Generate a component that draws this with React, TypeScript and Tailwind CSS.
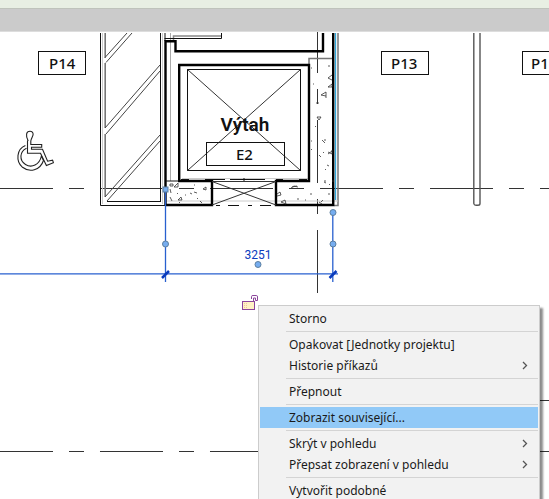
import React from 'react';

interface MenuEntry {
  label: string;
  submenu?: boolean;
  active?: boolean;
}

const menuGroups: MenuEntry[][] = [
  [{ label: 'Storno' }],
  [{ label: 'Opakovat [Jednotky projektu]' }, { label: 'Historie příkazů', submenu: true }],
  [{ label: 'Přepnout' }],
  [{ label: 'Zobrazit související...', active: true }],
  [
    { label: 'Skrýt v pohledu', submenu: true },
    { label: 'Přepsat zobrazení v pohledu', submenu: true },
  ],
  [{ label: 'Vytvořit podobné' }],
];

const grips = [
  [165.5, 244],
  [333, 212.5],
  [333, 244],
  [258, 264.5],
];

const ContextMenu: React.FC = () => (
  <div
    role="menu"
    className="absolute left-[258px] top-[273px] w-[282px] border border-[#cccccc] bg-[#f2f2f2] px-px py-0.5 shadow-[3px_3px_2px_rgba(0,0,0,0.45)]"
  >
    {menuGroups.map((group, index) => (
      <div key={index} role="group">
        {index > 0 && (
          <div role="separator" className="ml-[26px] flex h-[5px] items-center">
            <div className="h-px w-full bg-[#d4d4d4]" />
          </div>
        )}
        {group.map((entry) => (
          <button
            key={entry.label}
            type="button"
            role="menuitem"
            className={`flex h-[21px] w-full items-center justify-between pl-[29px] pr-2 text-left text-[12px] leading-[20px] text-[#1a1a1a] ${
              entry.active ? 'bg-[#91c9f7]' : 'hover:bg-[#91c9f7]'
            }`}
          >
            <span className="whitespace-nowrap">{entry.label}</span>
            {entry.submenu && (
              <svg width="8" height="10" viewBox="0 0 8 10" fill="none" stroke="#555" strokeWidth="1.3">
                <path d="M1 1 4.500 4.500 1 8" />
              </svg>
            )}
          </button>
        ))}
      </div>
    ))}
  </div>
);

const RoomTag: React.FC<{ x: number; y: number; width: number; label: string; textX: number }> = ({
  x,
  y,
  width,
  label,
  textX,
}) => (
  <g>
    <rect x={x} y={y} width={width} height="23" fill="none" stroke="#111" />
    <text x={textX} y={y + 17} fill="#111" className="text-[15px] font-medium">
      {label}
    </text>
  </g>
);

const FloorPlan: React.FC = () => (
  <svg className="block h-full w-full" role="img" aria-label="Výtah E2">
    <g transform="translate(0 -32)" fill="none" stroke="#111" strokeWidth="1">
      {/* grid axes */}
      <g stroke="#333" strokeDasharray="63 16 15 16">
        <path d="M-10 188.5H560M-10 451.5H258M317.5 10V294" />
        <path d="M539 451.5H560M539 400.5H560" strokeDasharray="none" />
      </g>

      {/* hatched shaft */}
      <path d="M100.5 33V205.5H165M160.5 33V201.5M107 201.5H161" />
      <path d="M102.5 33V204M162.5 33V204" stroke="#ccc" />
      <path d="M105.2 33V58M105.2 63V128M105.2 134V197" stroke="#777" strokeWidth="1.6" />
      <path
        d="M105 57.5 127 33M106 62.5 132 33M105 128 160 65M106 134 160 71M105 197 160 135M107 201 160 141"
        stroke="#444"
      />

      {/* upper frame */}
      <path d="M170.5 33V181" stroke="#aaa" />
      <path d="M173.5 41V36H221" stroke="#888" strokeWidth="1.5" />
      <path d="M164.5 38.5H221.5V33M165 33V41" />

      {/* concrete walls */}
      <path d="M309 64V58.5H332M338 33V205.5H334" stroke="#777" strokeWidth="1.5" />
      <path d="M166 201H338M182 178.5H309" stroke="#ccc" />
      <path d="M335.5 33V200" stroke="#2fa8dc" strokeWidth="1.3" />
      <g stroke="#000" strokeWidth="2.4">
        <path d="M165.5 205V41.3H175.5V51.3H323V33" />
        <path d="M212 181H179.2V65H309V181H276V205H333.2V33" />
        <path d="M165 205H212V180" />
      </g>
      <path d="M166 181H179M181 179.5H189M205 179.5H225M230 179.5H265M276 179.5H283M299 179.5H307M244 178V181" />

      {/* cabin */}
      <rect x="187.5" y="69.5" width="113" height="101" />
      <path d="M187.5 69.5 300.5 170.5M300.5 69.5 187.5 170.5" stroke="#333" />

      {/* door */}
      <path d="M212 181.5H276M212 181.5 276 205M212 205 276 181.5" stroke="#333" />
      <path d="M216 205.500H276" strokeDasharray="4 8 11 9" />

      {/* aggregate in the concrete */}
      <g stroke="#333" strokeWidth="0.8">
        <path d="m321 95 5-3v6m-5-3 5 1M328 78l4-3m-4 3 4 2m-4 7 4-3v3zM328 66h2m-17 18h1m-3-16h1m4 35h3M311 141h1m12 1 1 1m-5 13 1 1m-4-40h4l-2 3zM322 140l2 2m3 23 2 1m-4 3 1 1M328 154l4-3m-4 1 4 2v-4m-8-10h2m-2 42 2 1m-7-28 1 1m-5-30 1 1m-5 23 1-1m11 3 1 1" />
        <path d="m291 188 3-2 4 1m-6 0 5-1M277 194l3-2 1 3-4 1m4 6 4-2 1 4zm16-3h2m11-5h2m7 8 3 2m-1-2 2-2m5-6h2m-25 6h1m18-19h2m3 3 1 1m2-4h2" />
        <path d="m174 187 4-4v4zm-4-3h3v2h-3zm0 5 1 4m-1 4 2 4m6-1 3-3 1 3zm12-7 2 1m-13 8 1 1m20-2 2 2m-8-11 3 1m6-4 3-2v3zm-9-4h1m-18 8 1 1m7 1h1m11 3 1 1" />
      </g>

      {/* parking divider */}
      <path d="M473.8 33V203.5Q474 205.3 476 205.3H478Q480 205.3 480 203.5V33" stroke="#555" strokeWidth="1.4" />

      {/* wheelchair symbol */}
      <g stroke="#222" strokeWidth="1.1">
        <path d="M28 140.5C26.8 138.5 26.3 136 26.6 134C27 131.8 28.3 131.2 30 131.2C32 131.2 33.2 132.7 33.1 134.5C33 136.5 31 138.5 30.8 141V144.5H41.7V147.2H31.5V149.2H42.5L47.6 161.2L52.6 160.2L53.4 162.7L46.4 165.5L40.5 153.3H27.5V141Z" />
        <path d="M25.4 145.5C16.5 149 15.5 161.5 22.5 167.3C29.5 172.7 40 170.7 43.5 160.5L41.4 156C39.5 165 31.5 168.4 25.5 164.5C19 160.5 19.5 151.5 26.5 148.2" />
      </g>

      {/* selected dimension */}
      <g stroke="#2860cf">
        <path d="M0 273.8H338M165.5 189V282M332.8 212V282" strokeWidth="1.3" />
        <path d="M162 278 169 271M329.5 278 336.5 271" stroke="#0a3bbd" strokeWidth="2.5" />
      </g>
      <g fill="#76adf0" stroke="#5d7f9f">
        <rect x="163" y="187" width="5" height="5" />
        {grips.map(([cx, cy]) => (
          <circle key={`${cx}-${cy}`} cx={cx} cy={cy} r="3" />
        ))}
      </g>

      {/* open padlock */}
      <g stroke="#8b459b">
        <rect x="242.5" y="301.5" width="12" height="8" fill="#fff3c4" />
        <path d="M251.5 299V296.5Q251.5 295.5 253 295.5H256.5Q257.5 295.5 257.5 297V300.5H255.5V298H253.5V301" />
        <path d="M244.5 303V308M246.5 303V308" stroke="#f1c4a0" strokeDasharray="1 1" />
      </g>

      <g stroke="none">
        <RoomTag x={38.5} y={51.5} width={47} label="P14" textX={49} />
        <RoomTag x={381.5} y={51.5} width={47} label="P13" textX={391} />
        <RoomTag x={522.5} y={51.5} width={47} label="P1" textX={531} />
        <RoomTag x={206.5} y={142.5} width={78} label="E2" textX={236} />
        <text x="245" y="131" textAnchor="middle" fill="#111" className="font-[Roboto,sans-serif] text-[19px] font-semibold">
          Výtah
        </text>
        <text x="258" y="259" textAnchor="middle" fill="#0a3bbd" className="font-[Roboto,sans-serif] text-[12px]">
          3251
        </text>
      </g>
    </g>
  </svg>
);

const App: React.FC = () => {
  return (
    <div className="flex h-screen flex-col overflow-hidden bg-white font-['Noto_Sans','Open_Sans',sans-serif]">
      <header>
        <div className="h-2 bg-[#e8efe3]" />
        <div className="h-6 border-b border-t border-b-[#dddddd] border-t-[#bfc3bb] bg-[#cbcbcb]" />
      </header>
      <main className="relative min-h-0 flex-1 overflow-hidden">
        <FloorPlan />
        <ContextMenu />
      </main>
    </div>
  );
};

export default App;
